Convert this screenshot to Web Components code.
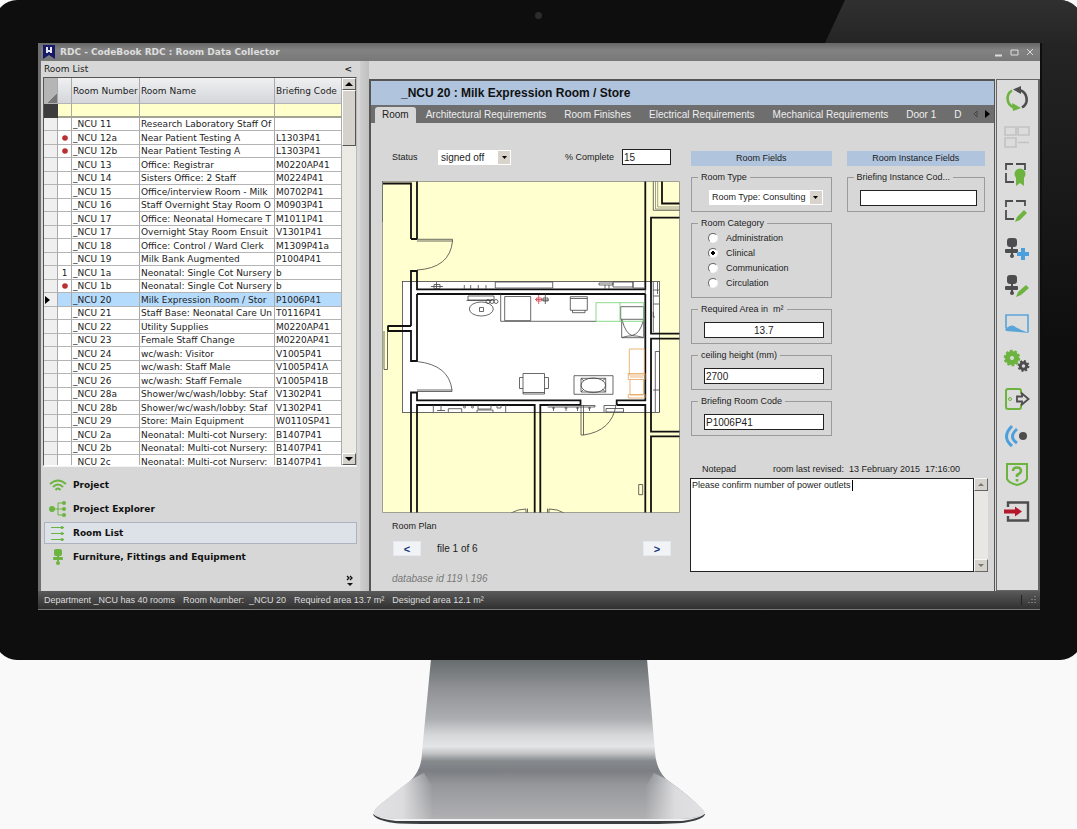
<!DOCTYPE html>
<html lang="en">
<head>
<meta charset="utf-8">
<title>RDC - CodeBook RDC : Room Data Collector</title>
<style>
body { margin: 0; background: #f9f9f9; overflow-x: hidden; font: 9px/14px "Liberation Sans", Arial, sans-serif; color: #1c1c1c; }
</style>
</head>
<body>
<monitor-frame>
  <app-window>
    <title-bar slot="title">RDC - CodeBook RDC : Room Data Collector</title-bar>
    <side-pane slot="side"></side-pane>
    <room-form slot="main"></room-form>
    <tool-strip slot="tools"></tool-strip>
    <status-bar slot="status"></status-bar>
  </app-window>
</monitor-frame>
<monitor-stand></monitor-stand>

<script>
const define = (name, html, setup) => customElements.define(name, class extends HTMLElement {
  constructor() {
    super();
    const t = document.createElement('template');
    t.innerHTML = html;
    this.attachShadow({ mode: 'open' }).append(t.content.cloneNode(true));
    if (setup) setup(this.shadowRoot, this);
  }
});

define('monitor-frame', `
<style>
:host { display: block; position: relative; overflow: hidden; margin: 0 -5px; padding: 43px 42px 50px 43px; border-radius: 22px; background: #0e0e0e; }
.gloss { position: absolute; top: 0; right: 0; width: 257px; height: 43px; background: linear-gradient(#303030, #252525); clip-path: polygon(20px 0, 100% 0, 100% 100%, 0 100%); }
.cam { position: absolute; top: 12px; left: calc(50% - 4px); width: 7px; height: 7px; border-radius: 50%; background: #2c2c30; }
.edge { position: absolute; top: 43px; right: 0; width: 40px; height: 300px; background: linear-gradient(#242424, #0e0e0e); }
slot { display: block; position: relative; }
</style>
<div class="gloss"></div><div class="edge"></div><div class="cam"></div>
<slot></slot>`);

define('app-window', `
<style>
:host { display: block; background: #d7d7d7; border-left: 3px solid #6f6f6f; box-sizing: border-box; }
.body { display: flex; align-items: stretch; }
.side { flex: 0 1 319px; min-width: 0; }
.split { flex: 0 0 9px; background: linear-gradient(90deg, #cfcfcf, #bfbfbf); }
.work { flex: 1 1 0; min-width: 0; display: flex; padding-top: 18px; }
.main { flex: 1 1 0; min-width: 0; }
.tools { flex: 0 0 45px; }
</style>
<slot name="title"></slot>
<div class="body">
  <div class="side"><slot name="side"></slot></div>
  <div class="split"></div>
  <div class="work">
    <div class="main"><slot name="main"></slot></div>
    <div class="tools"><slot name="tools"></slot></div>
  </div>
</div>
<slot name="status"></slot>`);

define('title-bar', `
<style>
:host { display: flex; align-items: center; height: 18px; padding: 0 4px 0 2px; background: linear-gradient(#666, #828282 40%, #787878); color: #dedede; font: bold 9px/18px "DejaVu Sans", Verdana, sans-serif; }
.t { flex: 1; padding-left: 5px; white-space: nowrap; }
button { border: 0; padding: 0; margin-left: 5px; background: none; width: 11px; height: 11px; display: block; }
svg { display: block; }
</style>
<svg width="12" height="14" viewBox="0 0 12 14"><path d="M0 0H12V14L6 10 0 14Z" fill="#161a68"/><path d="M4 2v6M8 2v6M4 6h4" stroke="#e8e8f4" stroke-width="2" fill="none"/></svg>
<div class="t"><slot></slot></div>
<button aria-label="Minimise"><svg width="11" height="11"><path d="M2 8.500h7" stroke="#ddd" stroke-width="2"/></svg></button>
<button aria-label="Maximise"><svg width="11" height="11"><path d="M2 3h7v5H2z" stroke="#ddd" fill="none"/></svg></button>
<button aria-label="Close"><svg width="11" height="11"><path d="M2 2l6 6M8 2L2 8" stroke="#ddd"/></svg></button>`);

define('side-pane', `
<style>
:host { display: block; padding: 0 3px 0 2px; }
header { display: flex; justify-content: space-between; align-items: center; height: 16px; padding: 0 5px 0 1px; font: 9px/16px "DejaVu Sans", Verdana, sans-serif; }
header button { border: 0; background: none; padding: 0; font: bold 9px/12px "DejaVu Sans", sans-serif; color: #222; }
</style>
<header><span>Room List</span><button aria-label="Collapse">&lt;</button></header>
<room-grid></room-grid>
<side-nav></side-nav>`);

const rooms = [
  ['', '_NCU 11', 'Research Laboratory Staff Of', ''],
  ['•', '_NCU 12a', 'Near Patient Testing A', 'L1303P41'],
  ['•', '_NCU 12b', 'Near Patient Testing A', 'L1303P41'],
  ['', '_NCU 13', 'Office: Registrar', 'M0220AP41'],
  ['', '_NCU 14', 'Sisters Office: 2 Staff', 'M0224P41'],
  ['', '_NCU 15', 'Office/interview Room - Milk', 'M0702P41'],
  ['', '_NCU 16', 'Staff Overnight Stay Room O', 'M0903P41'],
  ['', '_NCU 17', 'Office: Neonatal Homecare T', 'M1011P41'],
  ['', '_NCU 17', 'Overnight Stay Room Ensuit', 'V1301P41'],
  ['', '_NCU 18', 'Office: Control / Ward Clerk', 'M1309P41a'],
  ['', '_NCU 19', 'Milk Bank Augmented', 'P1004P41'],
  ['1', '_NCU 1a', 'Neonatal: Single Cot Nursery', 'b'],
  ['•', '_NCU 1b', 'Neonatal: Single Cot Nursery', 'b'],
  ['', '_NCU 20', 'Milk Expression Room / Stor', 'P1006P41'],
  ['', '_NCU 21', 'Staff Base: Neonatal Care Un', 'T0116P41'],
  ['', '_NCU 22', 'Utility Supplies', 'M0220AP41'],
  ['', '_NCU 23', 'Female Staff Change', 'M0220AP41'],
  ['', '_NCU 24', 'wc/wash: Visitor', 'V1005P41'],
  ['', '_NCU 25', 'wc/wash: Staff Male', 'V1005P41A'],
  ['', '_NCU 26', 'wc/wash: Staff Female', 'V1005P41B'],
  ['', '_NCU 28a', 'Shower/wc/wash/lobby: Staf', 'V1302P41'],
  ['', '_NCU 28b', 'Shower/wc/wash/lobby: Staf', 'V1302P41'],
  ['', '_NCU 29', 'Store: Main Equipment', 'W0110SP41'],
  ['', '_NCU 2a', 'Neonatal: Multi-cot Nursery:', 'B1407P41'],
  ['', '_NCU 2b', 'Neonatal: Multi-cot Nursery:', 'B1407P41'],
  ['', '_NCU 2c', 'Neonatal: Multi-cot Nursery:', 'B1407P41']
];

define('room-grid', `
<style>
:host { display: flex; height: 389px; overflow: hidden; border: 1px solid #555; border-bottom-color: #fff; border-right-color: #bbb; box-sizing: border-box; font: 9px/12px "DejaVu Sans", Verdana, sans-serif; background: #fff; }
.view { flex: 1; min-width: 0; overflow: hidden; }
table { width: 100%; table-layout: fixed; border-collapse: separate; border-spacing: 0; }
.c1 { width: 14px; } .c3 { width: 68px; } .c5 { width: 67px; }
th, td { padding: 0 0 0 1px; box-sizing: border-box; border-right: 1px solid #a9a9a9; border-bottom: 1px solid #b4b4b4; font-weight: normal; text-align: left; white-space: nowrap; overflow: hidden; }
thead th { height: 26px; background: linear-gradient(#f0f0f2, #d4d6d9); }
thead th:first-child { background: linear-gradient(135deg, #b5b5b5 75%, #777 75%); }
.filter td { height: 14px; background: #ffffcc; border-bottom: 2px solid #a3a394; }
.filter td:first-child { background: #3c3c3c; border-color: #3c3c3c; }
tbody td { height: 13px; line-height: 12px; }
tbody tr:nth-child(even) td { height: 14px; }
tbody td:nth-child(-n+2) { padding: 0; text-align: center; }
tbody td:first-child { background: #efefef; }
tr.sel td { background: #b4dafc; }
tr.sel td:first-child { background: #efefef; }
svg { display: block; margin: 0 auto; }
tr.sel td:first-child svg { margin: 0; }
.bar { flex: 0 0 14px; display: flex; flex-direction: column; background: #eceae4; }
.bar i { display: block; box-sizing: border-box; background: #d5d2cb; border: 1px solid; border-color: #fff #555 #555 #fff; }
.bar .arrow { height: 12px; display: grid; place-items: center; }
.thumb { height: 56px; }
.gap { flex: 1; }
</style>
<div class="view"><table>
<colgroup><col class="c1"><col class="c1"><col class="c3"><col><col class="c5"></colgroup>
<thead><tr><th></th><th></th><th>Room Number</th><th>Room Name</th><th>Briefing Code</th></tr>
<tr class="filter"><td></td><td></td><td></td><td></td><td></td></tr></thead>
<tbody></tbody></table></div>
<div class="bar"><i class="arrow"><svg width="8" height="4"><path d="M0 4L4 0 8 4Z"/></svg></i><i class="thumb"></i><span class="gap"></span><i class="arrow"><svg width="8" height="4"><path d="M0 0L4 4 8 0Z"/></svg></i></div>`,
root => {
  const body = root.querySelector('tbody');
  for (const [mark, num, name, code] of rooms) {
    const tr = body.insertRow();
    const sel = num === '_NCU 20';
    if (sel) tr.className = 'sel';
    tr.insertCell().innerHTML = sel ? '<svg width="6" height="10"><path d="M1 1L6 5 1 9Z"/></svg>' : '';
    tr.insertCell().innerHTML = mark === '•' ? '<svg width="6" height="6"><circle cx="3" cy="3" r="2.800" fill="#b93030"/></svg>' : mark;
    for (const v of [num, name, code]) tr.insertCell().textContent = v;
  }
});

define('side-nav', `
<style>
:host { display: block; border-top: 1px solid #f4f4f4; padding: 7px 0 2px 1px; }
nav { display: grid; gap: 2px; }
a { display: flex; align-items: center; gap: 6px; height: 22px; box-sizing: border-box; padding-left: 4px; border: 1px solid transparent; color: #111; text-decoration: none; font: bold 9px/20px "DejaVu Sans", Verdana, sans-serif; white-space: nowrap; }
a.on { background: #dde1e8; border-color: #adb4c0; }
svg { flex: none; }
.more { display: block; margin: 7px 2px 0 auto; border: 0; padding: 0; background: none; width: 10px; height: 12px; }
</style>
<nav>
<a href="#project"><svg width="18" height="16" fill="none" stroke="#6cb33f" stroke-width="2"><path d="M1 7Q9 0 17 7M4 10Q9 5 14 10M6.500 13Q9 10 11.500 13"/></svg>Project</a>
<a href="#explorer"><svg width="18" height="16" fill="none" stroke="#6cb33f"><path d="M3 8H9M15 2H9V14H15M9 8H15"/><g fill="#6cb33f" stroke="none"><circle cx="3" cy="8" r="3"/><circle cx="15" cy="2" r="2"/><circle cx="15" cy="8" r="2"/><circle cx="15" cy="14" r="2"/></g></svg>Project Explorer</a>
<a class="on" href="#rooms"><svg width="18" height="16" fill="none" stroke="#6cb33f"><path d="M2 2.500H15M2 8.500H15M2 14.500H15"/><g fill="#6cb33f" stroke="none"><circle cx="13" cy="2.500" r="1.500"/><circle cx="13" cy="8.500" r="1.500"/><circle cx="13" cy="14.500" r="1.500"/></g></svg>Room List</a>
<a href="#ffe"><svg width="18" height="16" fill="#6cb33f"><rect x="5" y="0" width="8" height="7" rx="2"/><rect x="4" y="8" width="10" height="3" rx="1"/><path d="M8 6h2v6H8z"/><circle cx="9" cy="14" r="2"/></svg>Furniture, Fittings and Equipment</a>
</nav>
<button class="more" aria-label="More"><svg width="10" height="12" fill="none" stroke="#111" stroke-width="1.300"><path d="M2 1l2 2-2 2M5 1l2 2-2 2"/><path d="M2 8h6L5 11Z" fill="#111" stroke="none"/></svg></button>`);

define('field-box', `
<style>
:host { display: block; }
fieldset { margin: 0; padding: 0 7px 4px 12px; min-width: 0; height: 100%; box-sizing: border-box; border: 1px solid #9b9b9b; }
legend { margin-left: -6px; padding: 0 3px; line-height: 14px; height: 14px; white-space: pre; }
</style>
<fieldset><legend></legend><slot></slot></fieldset>`,
(root, host) => { root.querySelector('legend').textContent = host.getAttribute('label'); });

define('room-form', `
<style>
:host { display: block; height: 100%; box-sizing: border-box; border: solid #555; border-width: 2px 1px 0 2px; }
h1 { margin: 0; padding-left: 30px; background: #b0c4de; color: #111; font: bold 12px/24px "Liberation Sans", Arial, sans-serif; white-space: nowrap; }
.tabs { display: flex; align-items: flex-end; height: 18px; background: #6e6e6e; padding-left: 4px; font-size: 10px; }
.tabs button { border: 0; background: none; margin: 0; padding: 0 9px; font: inherit; line-height: 16px; color: #efefef; white-space: nowrap; }
.tabs button.on { background: #d7d7d7; color: #222; border-radius: 3px 3px 0 0; padding: 0 7px; margin-right: 1px; }
.tabs .scroll { flex: none; margin: 0 4px 4px auto; display: block; }
.cols { display: grid; grid-template-columns: minmax(0, 298fr) minmax(0, 298fr); gap: 10px; padding: 26px 6px 0 11px; }
.top { display: flex; align-items: center; height: 16px; padding: 0 9px 0 10px; }
.top label:first-child { width: 46px; }
.top .pc { margin-left: auto; margin-right: 8px; }
.top input { width: 49px; }
input[type=text] { box-sizing: border-box; height: 16px; padding: 0 1px; border: 1px solid #222; border-radius: 0; background: #fff; font: 10px/14px "Liberation Sans", Arial, sans-serif; color: #1c1c1c; display: block; }
field-box input[type=text] { width: 100%; }
.drop { display: grid; width: 73px; height: 15px; background: #fff; }
.drop > * { grid-area: 1 / 1; }
.drop select { appearance: none; border: 0; border-radius: 0; margin: 0; padding: 0 0 0 3px; background: none; font: 10px/15px "Liberation Sans", Arial, sans-serif; color: #1c1c1c; width: 100%; height: 15px; }
.f .drop select { font-size: 9px; }
.drop i { justify-self: end; margin: 1px; width: 12px; background: #d8d4cc; display: grid; place-items: center; pointer-events: none; }
.drop svg { display: block; }
.plan { margin-top: 16px; }
.cap { padding: 6px 0 0 10px; }
.pager { display: flex; align-items: center; height: 15px; padding: 8px 9px 0 11px; font-size: 10px; }
.pager button { box-sizing: border-box; width: 28px; height: 15px; padding: 0; border: 1px solid #e6e9ee; background: #f1f3f6; color: #16357a; font: bold 11px/12px "Liberation Sans", Arial, sans-serif; }
.pager span { margin-left: 16px; flex: 1; }
.db { padding: 16px 0 5px 10px; font-size: 10px; font-style: italic; color: #777; }
.fields { display: grid; grid-template-columns: minmax(0, 140fr) minmax(0, 138fr); column-gap: 15px; padding: 0 3px 0 1px; margin-top: 2px; align-items: start; }
.col { display: grid; gap: 4px; }
h2 { margin: 0; font: inherit; line-height: 15px; text-align: center; background: #b0c4de; }
field-box { height: 42px; }
field-box.cat { height: 82px; }
.f { padding-top: 6px; }
.f .drop { margin-left: 5px; width: auto; margin-right: 1px; }
.cat label { display: flex; align-items: center; height: 15px; padding-left: 4px; gap: 8px; }
.cat input { appearance: none; margin: 0; width: 10px; height: 10px; box-sizing: border-box; border-radius: 50%; background: #fff; border: 1px solid; border-color: #666 #f4f4f4 #f4f4f4 #666; }
.cat input:checked { background: radial-gradient(circle, #000 2px, #fff 2px); }
.note { display: flex; padding-left: 12px; margin-top: 26px; }
.note label { width: 71px; }
.note span { white-space: pre; }
.pad { position: relative; display: flex; margin: 2px 0 0; height: 94px; }
textarea { flex: 1; min-width: 0; box-sizing: border-box; resize: none; margin: 0; padding: 0 1px; border: 1px solid #222; border-radius: 0; background: #fff; font: 9px/12px "Liberation Sans", Arial, sans-serif; color: #1c1c1c; overflow: hidden; }
.bar { width: 14px; display: flex; flex-direction: column; justify-content: space-between; background: #e9e7e3; }
.bar i { box-sizing: border-box; height: 13px; background: #d5d2cb; border: 1px solid; border-color: #f6f6f6 #666 #666 #f6f6f6; display: grid; place-items: center; }
.caret { position: absolute; left: 162px; top: 2px; width: 1px; height: 11px; background: #000; }
</style>
<h1>_NCU 20 : Milk Expression Room / Store</h1>
<div class="tabs" role="tablist">
  <button class="on" role="tab">Room</button><button role="tab">Architectural Requirements</button><button role="tab">Room Finishes</button><button role="tab">Electrical Requirements</button><button role="tab">Mechanical Requirements</button><button role="tab">Door 1</button><button role="tab">D</button>
  <svg class="scroll" width="18" height="10"><path d="M5 2L2 5 5 8Z" fill="none" stroke="#444"/><path d="M13 1L18 5 13 9Z"/></svg>
</div>
<div class="cols">
  <div>
    <div class="top">
      <label for="status">Status</label>
      <span class="drop"><select id="status"><option>signed off</option></select><i><svg width="5" height="3"><path d="M0 0h5L2.500 3Z"/></svg></i></span>
      <label class="pc" for="pc">% Complete</label><input id="pc" type="text" value="15">
    </div>
    <floor-plan class="plan"></floor-plan>
    <div class="cap">Room Plan</div>
    <div class="pager"><button aria-label="Previous">&lt;</button><span>file 1 of 6</span><button aria-label="Next">&gt;</button></div>
    <div class="db">database id 119 \\ 196</div>
  </div>
  <div>
    <div class="fields">
      <div class="col">
        <h2>Room Fields</h2>
        <field-box label="Room Type"><div class="f"><span class="drop"><select aria-label="Room Type"><option>Room Type: Consulting</option></select><i><svg width="5" height="3"><path d="M0 0h5L2.500 3Z"/></svg></i></span></div></field-box>
        <field-box class="cat" label="Room Category">
          <label><input type="radio" name="cat">Administration</label>
          <label><input type="radio" name="cat" checked>Clinical</label>
          <label><input type="radio" name="cat">Communication</label>
          <label><input type="radio" name="cat">Circulation</label>
        </field-box>
        <field-box label="Required Area in  m²"><div class="f"><input type="text" aria-label="Required Area in m²" value="13.7" style="text-align:center"></div></field-box>
        <field-box label="ceiling height (mm)"><div class="f"><input type="text" aria-label="ceiling height (mm)" value="2700"></div></field-box>
        <field-box label="Briefing Room Code"><div class="f"><input type="text" aria-label="Briefing Room Code" value="P1006P41"></div></field-box>
      </div>
      <div class="col">
        <h2>Room Instance Fields</h2>
        <field-box label="Briefing Instance Cod..."><div class="f"><input type="text" aria-label="Briefing Instance Code"></div></field-box>
      </div>
    </div>
    <div class="note"><label for="pad">Notepad</label><span>room last revised:  13 February 2015  17:16:00</span></div>
    <div class="pad"><textarea id="pad">Please confirm number of power outlets</textarea><b class="caret"></b>
      <div class="bar"><i><svg width="6" height="3"><path d="M0 3L3 0 6 3Z" fill="#777"/></svg></i><i><svg width="6" height="3"><path d="M0 0L3 3 6 0Z" fill="#777"/></svg></i></div></div>
  </div>
</div>`);

define('floor-plan', `
<style>
:host { display: block; }
svg { display: block; width: 100%; height: auto; }
.w { stroke: #111; stroke-width: 1.800; }
.t { stroke: #444; stroke-width: .8; }
.l { stroke: #777; stroke-width: .7; }
</style>
<svg viewBox="382 181 298 332" fill="none" role="img" aria-label="Room plan">
<rect x="382" y="181" width="298" height="332" fill="#ffffcf"/>
<rect x="402.500" y="281.500" width="257" height="131" fill="#fff" class="t"/>
<g class="w">
<path d="M383 183.500H411V239M417 181V239M411 326V271H417V289.300H645.300V181M417 294H645.300M388 326H411M388 331H411V361H417V294M388 325.500V331.500"/>
<path d="M411 239H417M411 513V392.500H417V400.300H580.500V405H540.300V513M534.700 513V405H417V513M616.700 405V400.300H645.300V294M616.700 405H645.300V513"/>
<path d="M680 217.700H651V333.700H680M680 338.700H651V431.700H680M680 436.300H651V513M662 181V203.500H680"/>
</g>
<g class="t">
<path d="M653.300 181V210.300H680M645.300 289V294"/>
<path d="M417 239.300H452.500V241H417M452.500 241Q450 268 417 270M417 391.500H452V390H417M417 361.500Q449 365 452 390"/>
<path d="M581 405V435H583.500V405M583.500 435Q612 431 616 405"/>
<path d="M382.500 181V222M384 331V369.500H387.500V331"/>
<path d="M495.300 282H552.700V288H495.300ZM464.300 285v4M470.700 285v4M478.300 285v4M486 285v4M431 286.500h12M434 284.500h6v4h-6zM436.500 282v7M599 283h14v2h-14zM605 285v4M609 285v4M613 282h20v5h-20zM633 282v6h11"/>
<path d="M468 296H494V300H468ZM466.500 300.500H492M500.700 294V321.300H596M504.700 296.500H530.700V320.700H504.700ZM479.500 307.500h4v4h-4z"/>
<ellipse cx="481.300" cy="309" rx="12" ry="7"/><circle cx="488" cy="301.500" r="2"/><circle cx="492" cy="301.500" r="2"/><circle cx="496" cy="301.500" r="2"/>
<path d="M570.300 296.700H587.300V310.300H570.300ZM572.500 310.300V312.700H585V310.300M570.300 298.500H587.300M542 300h7M545.300 294v10M543 298h5v3h-5z"/>
<path d="M620.700 306.700H643.700V319.300H620.700ZM621.700 319.300V337.700H643.700V319.300M622 320Q626 334 632 335.500Q640 334 643.500 320M622 337.500Q632 334 643.500 337.500"/>
<path d="M523 373.500H544.500V394H523ZM523 392.500H544.500M523 377.500H519.500V388.500H523M544.500 377.500H548.500V388.500H544.500"/>
<path d="M574 375.700H613V394.300H574ZM581 378.300H605.700V392H581ZM581 378.300L584 381M605.700 378.300L602 381M581 392L584 389M605.700 392L602 389"/>
<ellipse cx="593.300" cy="385.300" rx="12.300" ry="7.300"/>
<path d="M433.300 405V412M505.700 405V412M448.300 412V408.700H461.700V412M437 410.500h8M441 405v6M478 405V409H491V405M477 412V410H493V412M497 405v3h4v-3"/>
<circle cx="464.500" cy="407" r="1"/><circle cx="472.500" cy="407" r="1"/>
<path d="M547.700 405.500H595V407H547.700M553.500 407v4M566 407v4M577.500 407v4M589.500 407v4M552 408h3M564.500 408h3M576 408h3M588 408h3M604 405.500H616M604 405.500V412M606 408.500H623.500V412H606Z"/>
<path d="M653.300 282V332M657.500 282V294M653.300 290H659M653.300 296H659M653.300 304H659M653.300 312V317H655M655.300 351.500H659.500V412M655.300 351.500V412M653 390h7"/>
<path d="M511 513Q518 509 526 509V513M527.500 508.500V513M547.500 513V508.500M549 513V509Q558 509 564 513M638.700 484.500H642.700V494.700H638.700Z"/>
</g>
<g class="l"><path d="M657.700 181V207H680M655.500 181V209H680M382.500 181.500H679.500V512.500H382.500Z"/></g>
<g stroke="#6fcf6f" stroke-width=".8"><path d="M596 302.700H643.700V321.300H596ZM620 302.700V321.300"/></g>
<g stroke="#d9565e" stroke-width=".9"><path d="M535 299.500h7M538.700 295v9M536.500 298h5v3h-5z"/></g>
<g stroke="#e6a25c" stroke-width=".8"><path d="M629.300 349H644.300V375H629.300ZM628.300 373.500H645V379.500H628.300ZM630 379.500V395H643.500V379.500M628.300 394.500H645V398H628.300ZM630 377H643.500"/></g>
</svg>`);

const icons = [
  ['Refresh', '<g stroke-width="2.600"><path d="M9 4.500A9.500 9.500 0 0 0 11 21.500" stroke="#6cb33f"/><path d="M9 17l9 5-8 3z" fill="#6cb33f" stroke="none"/><path d="M19 21.500A9.500 9.500 0 0 0 16 4" stroke="#4d4d4f"/><path d="M18 0l-8 3.500 8 4.500z" fill="#4d4d4f" stroke="none"/></g>'],
  ['Layout', '<path d="M2 4h11v8H2zM15 4h11v8H15zM2 15h11v9H2zM15 19.500h11" stroke="#c2c2c2" stroke-width="1.600"/>'],
  ['Certify room', '<path d="M3 9V3h7M13 3h9v6M3 12v9h8" stroke="#4d4d4f" stroke-width="1.800"/><g fill="#6cb33f"><circle cx="17" cy="13" r="5.500"/><path d="M13 16h8v9l-4-3-4 3z"/></g>'],
  ['Edit room', '<path d="M3 9V3h7M13 3h9v5M3 12v9h8" stroke="#4d4d4f" stroke-width="1.800"/><path d="M12 24l2-5 7-7 3 3-7 7z" fill="#6cb33f"/>'],
  ['Add equipment', '<g fill="#4d4d4f"><rect x="4" y="2" width="10" height="9" rx="3"/><rect x="2" y="13" width="13" height="4" rx="1"/><path d="M8 11h2v8H8z"/><circle cx="9" cy="20" r="2"/></g><path d="M20 12v12M14 18h12" stroke="#4b9fdc" stroke-width="4"/>'],
  ['Edit equipment', '<g fill="#4d4d4f"><rect x="4" y="2" width="10" height="9" rx="3"/><rect x="2" y="13" width="13" height="4" rx="1"/><path d="M8 11h2v8H8z"/><circle cx="9" cy="20" r="2"/></g><path d="M13 24l2-5 8-7 3 3-8 7z" fill="#6cb33f"/>'],
  ['Plan view', '<path d="M3 17V4H25V21.500" stroke="#5ba4d8" stroke-width="1.600"/><path d="M2 18Q8 13 11 15Q17 19 26 22L3 20Z" fill="#5ba4d8"/>'],
  ['Settings', '<circle cx="9" cy="10" r="4.500" stroke="#6cb33f" stroke-width="5"/><circle cx="9" cy="10" r="7" stroke="#6cb33f" stroke-width="2.500" stroke-dasharray="2.600 1.800"/><circle cx="20.500" cy="18" r="3.200" stroke="#4d4d4f" stroke-width="3"/><circle cx="20.500" cy="18" r="5" stroke="#4d4d4f" stroke-width="1.800" stroke-dasharray="2 1.900"/>'],
  ['Leave room', '<path d="M18 8V5Q18 3 16 3H5Q3 3 3 5V21Q3 23 5 23H16Q18 23 18 21V18" stroke="#6cb33f" stroke-width="2"/><circle cx="7" cy="13" r="1.500" stroke="#6cb33f"/><path d="M14 10.500h5V7.500L25.500 13 19 18.500V15.500H14Z" stroke="#4d4d4f" stroke-width="1.800"/>'],
  ['Broadcast', '<g stroke="#4b9fdc" stroke-width="3"><path d="M9 3Q-2 14 9 23M14 6Q5 14 14 20"/></g><circle cx="20" cy="13" r="4" fill="#4d4d4f"/>'],
  ['Help', '<path d="M4 3H24V18Q22 22 14 24Q6 22 4 18Z" stroke="#6cb33f" stroke-width="2"/><path d="M10 10Q10 6.500 14 6.500T18 10Q18 12 14 14V16M14 18v2.500" stroke="#6cb33f" stroke-width="2.600"/>'],
  ['Exit', '<path d="M5 9V4.500H25V22.500H5V18" stroke="#4d4d4f" stroke-width="2.400"/><path d="M1 11.500H12V8.500L19 13.500 12 18.500V15.500H1Z" fill="#b5172b"/>']
];

define('tool-strip', `
<style>
:host { display: block; height: 100%; box-sizing: border-box; border: solid #666; border-width: 1px 2px 1px 1px; margin-left: 1px; background: #dcdcdc; }
div { display: flex; flex-direction: column; align-items: center; padding-right: 2px; }
button { border: 0; background: none; padding: 0; width: 28px; height: 37px; display: grid; place-items: center; }
button:nth-child(even) { height: 38px; }
svg { display: block; fill: none; }
</style><div></div>`, root => {
  root.querySelector('div').innerHTML = icons.map(([n, g]) =>
    `<button aria-label="${n}"><svg width="28" height="26" viewBox="0 0 28 26">${g}</svg></button>`).join('');
});

define('status-bar', `
<style>
:host { display: flex; align-items: center; gap: 8px; height: 19px; padding: 0 3px; background: linear-gradient(#5a5a5a, #303030); color: #dcdcdc; margin-left: -3px; padding-left: 6px; border-bottom: 1px solid #777; box-sizing: border-box; white-space: nowrap; }
svg { margin-left: auto; }
</style>
<span>Department _NCU has 40 rooms</span><span>Room Number: &nbsp;_NCU 20</span><span>Required area 13.7 m²</span><span>Designed area 12.1 m²</span>
<svg width="18" height="14"><path d="M2.500 2v10" stroke="#222"/><path d="M16 3v9M13 6v6M10 9v3" stroke="#777" stroke-dasharray="1 2" stroke-width="2"/></svg>`);

define('monitor-stand', `
<style>:host { display: block; } svg { display: block; margin: 0 auto; }</style>
<svg width="334" height="168" viewBox="372 661 334 168" aria-hidden="true">
<defs>
<linearGradient id="v" gradientUnits="userSpaceOnUse" x1="0" y1="660" x2="0" y2="822">
<stop offset="0" stop-color="#666b6d"/><stop offset=".18" stop-color="#8f9194"/><stop offset=".37" stop-color="#adaeb1"/><stop offset=".47" stop-color="#d6d7d9"/><stop offset=".54" stop-color="#e4e5e7"/><stop offset=".58" stop-color="#c4c6c8"/><stop offset=".63" stop-color="#868a8d"/><stop offset=".69" stop-color="#7b7e83"/><stop offset=".78" stop-color="#96989b"/><stop offset=".95" stop-color="#acacaf"/><stop offset="1" stop-color="#b2b2b5"/></linearGradient>
<linearGradient id="h" gradientUnits="userSpaceOnUse" x1="373" y1="0" x2="705" y2="0">
<stop offset="0" stop-color="#e2e2e4"/><stop offset=".09" stop-color="#dcdcde"/><stop offset=".18" stop-color="#dcdcde" stop-opacity="0"/><stop offset=".82" stop-color="#dcdcde" stop-opacity="0"/><stop offset=".91" stop-color="#dcdcde"/><stop offset="1" stop-color="#e2e2e4"/></linearGradient>
</defs>
<path d="M373 815Q374 821 394 824Q400 825 440 825H640Q680 825 688 823Q704 820 705 815Z" fill="#3b3e41"/>
<path d="M373 815Q378 820 396 822H682Q702 819 705 814Z" fill="#f2f2f3"/>
<path d="M431 660H647L655 753Q656 770 666 780Q690 797 703 811Q708 816 694 819Q688 820 680 820H396Q382 819 375 816Q371 813 381 805L410 782Q422 771 422 753Z" fill="url(#v)"/>
<path d="M412 780L424 774L434 790V820H396Q382 819 375 816Q371 813 381 805ZM666 780L654 774L644 790V820H680Q708 818 704 812Q697 803 666 780Z" fill="url(#h)"/>
</svg>`);
</script>
</body>
</html>
